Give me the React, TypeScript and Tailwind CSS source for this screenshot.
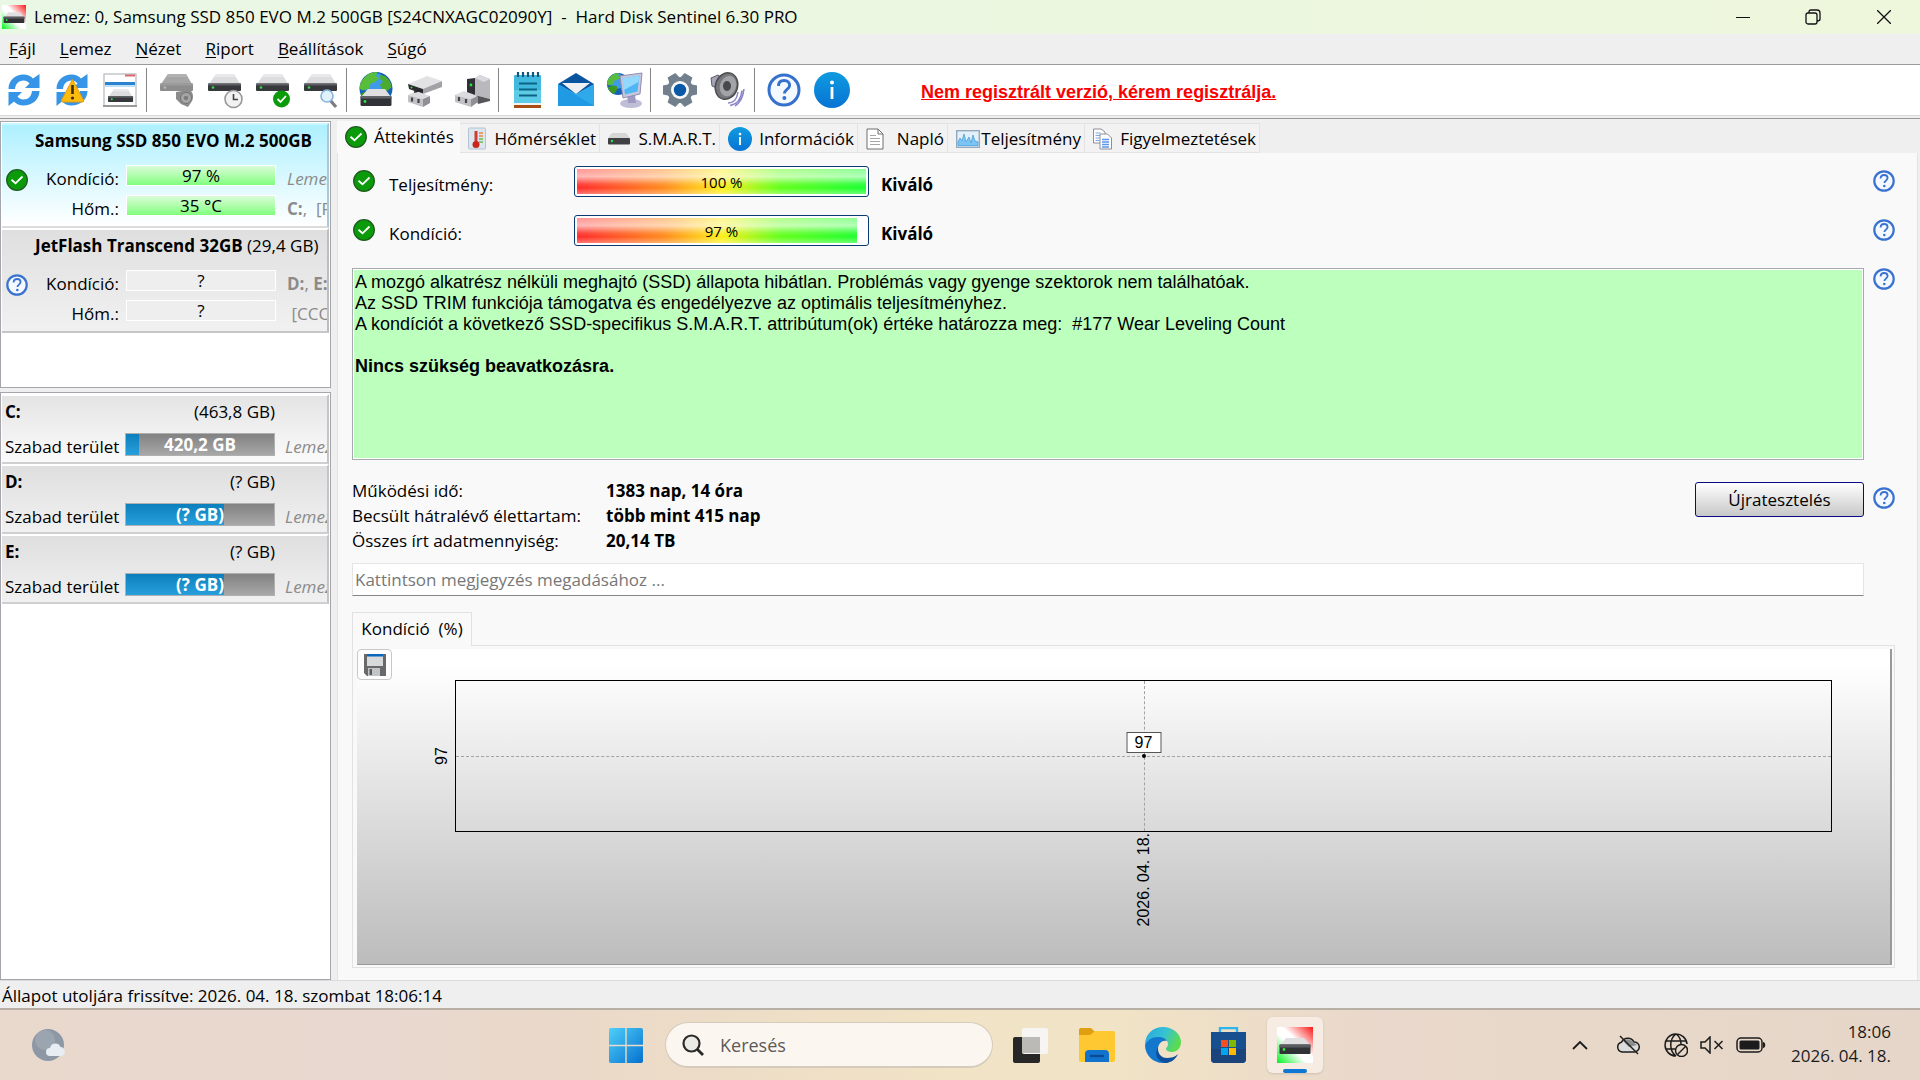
import React from "react";

const CheckIcon: React.FC<{ className?: string }> = ({ className = "size-[22px]" }) => (
  <svg viewBox="0 0 22 22" className={`shrink-0 ${className}`}>
    <circle cx="11" cy="11" r="10.3" fill="#0a9a0a" stroke="#1d5c1d" strokeWidth="1.3" />
    <path d="M5.5 10.8 9.5 14.3 16.5 7.5" fill="none" stroke="#fff" strokeWidth="1.8" />
  </svg>
);

const HelpIcon: React.FC<{ className?: string }> = ({ className = "size-[22px]" }) => (
  <svg viewBox="0 0 22 22" className={`shrink-0 ${className}`}>
    <circle cx="11" cy="11" r="9.7" fill="#f4f9ff" stroke="#3a72cf" strokeWidth="2.2" />
    <path d="M7.6 8.6C7.6 6.2 9 5 11.1 5s3.5 1.2 3.5 3.1c0 2.4-3.2 2.6-3.2 5" fill="none" stroke="#3a72cf" strokeWidth="1.8" />
    <circle cx="11.3" cy="16" r="1.3" fill="#3a72cf" />
  </svg>
);

const InfoIcon: React.FC<{ className?: string }> = ({ className = "size-6" }) => (
  <svg viewBox="0 0 36 36" className={`shrink-0 ${className}`}>
    <defs>
      <linearGradient id="info" x1="0" y1="0" x2="0" y2="1">
        <stop offset="0" stopColor="#109be0" />
        <stop offset="1" stopColor="#0673d3" />
      </linearGradient>
    </defs>
    <circle cx="18" cy="18" r="18" fill="url(#info)" />
    <path d="M18 15v12" stroke="#fff" strokeWidth="2.8" />
    <circle cx="18" cy="10.6" r="2" fill="#fff" />
  </svg>
);

const Drive: React.FC<{ gray?: boolean }> = ({ gray }) => (
  <>
    <path d="M8 0H26L32 10H1Z" fill={gray ? "#a6a6a6" : "#dcdcde"} />
    <path d="M8 0H26L28 3H6Z" fill={gray ? "#b2b2b2" : "#e9e9eb"} />
    <rect x="0" y="9.5" width="33" height="7.5" rx="1" fill={gray ? "#8d8d8d" : "#36383c"} />
    <rect x="0" y="9.5" width="33" height="2" fill={gray ? "#9c9c9c" : "#5c5e62"} />
    <circle cx="5" cy="13.5" r="1.3" fill={gray ? "#a8c0a8" : "#2ee03a"} />
  </>
);

const SentinelIcon: React.FC<{ className?: string }> = ({ className = "size-6" }) => (
  <svg viewBox="0 0 36 36" className={`shrink-0 ${className}`}>
    <defs>
      <linearGradient id="sentinel" x1="0" y1="1" x2="1" y2="0">
        <stop offset="0" stopColor="#00f21c" />
        <stop offset=".42" stopColor="#fff" />
        <stop offset=".58" stopColor="#fff" />
        <stop offset="1" stopColor="#fb1414" />
      </linearGradient>
    </defs>
    <rect width="36" height="36" fill="url(#sentinel)" />
    <path d="M9 11H27L33 18H3Z" fill="#e0e0e3" />
    <rect x="2.5" y="17.5" width="31" height="9.5" rx="1" fill="#303236" />
    <rect x="2.5" y="17.5" width="31" height="3" fill="#5a5c60" />
    <circle cx="7" cy="22.5" r="1.4" fill="#2ee03a" />
  </svg>
);

const RefreshShape = () => (
  <>
    <path d="M2 17C2 8 9 2.500 17 2.500c4 0 7 1.500 9.500 4L33 2v14H18.500l4.500-4.500C21.500 9.500 19.500 8.500 17 8.500c-5 0-8 3.500-8.500 8.500Z" fill="#3695e6" />
    <path d="M33 19c0 9-8 14.500-16 14.500-4 0-7-1.500-9.500-4L2 34V20h13.500L11 24.500c1.500 2 3.500 3 6 3 5 0 8-3.500 8.500-8.500Z" fill="#3695e6" />
  </>
);

const Globe: React.FC<{ r: number; cx: number; cy: number }> = ({ r, cx, cy }) => (
  <g transform={`translate(${cx - r} ${cy - r}) scale(${r / 16})`}>
    <circle cx="16" cy="16" r="16" fill="#1760b8" />
    <circle cx="15" cy="12" r="11" fill="#3e9be8" />
    <path d="M5 5C9 1 13 0 17 0l-1 4 3 2-4 4-4 1-2 5-6 2-3-2C0 12 2 8 5 5Z" fill="#58bd38" />
    <path d="M20 3l5 1c4 3 6 7 6 11l-5 4-4-1-2-6 3-3-3-2Z" fill="#4bab2e" />
    <path d="M8 18l6 1 1 5-5 7c-4-2-8-6-9-10Z" fill="#3c9a24" />
  </g>
);

type ToolName = "refresh" | "warn" | "window" | "noise" | "clock" | "check" | "search" | "web" | "dock" | "dock2" | "notes" | "mail" | "network" | "gear" | "sound" | "help" | "info";

const toolGroups: { name: ToolName; label: string }[][] = [
  [
    { name: "refresh", label: "Frissítés" },
    { name: "warn", label: "Figyelmeztetés" },
    { name: "window", label: "Ablak" },
  ],
  [
    { name: "noise", label: "Zajszint" },
    { name: "clock", label: "Ütemezés" },
    { name: "check", label: "Teszt" },
    { name: "search", label: "Keresés" },
  ],
  [
    { name: "web", label: "Web" },
    { name: "dock", label: "Csatlakozás" },
    { name: "dock2", label: "Leválasztás" },
  ],
  [
    { name: "notes", label: "Riport" },
    { name: "mail", label: "E-mail" },
    { name: "network", label: "Hálózat" },
  ],
  [
    { name: "gear", label: "Beállítások" },
    { name: "sound", label: "Hang" },
  ],
  [
    { name: "help", label: "Súgó" },
    { name: "info", label: "Információ" },
  ],
];

const toolIcons: Record<ToolName, React.ReactNode> = {
  refresh: (
    <g transform="translate(.5 0)">
      <RefreshShape />
    </g>
  ),
  warn: (
    <g transform="translate(.5 0)">
      <RefreshShape />
      <path d="M18 7.500 29 28q.8 2-1.200 2H8.200Q6.200 30 7 28Z" fill="#fdbb10" stroke="#e79a0c" />
      <path d="M18 13v9" stroke="#3a2c0c" strokeWidth="2.6" />
      <circle cx="18" cy="26" r="1.6" fill="#3a2c0c" />
    </g>
  ),
  window: (
    <>
      <rect x="2" y="2" width="32" height="32" fill="#fff" stroke="#b4b8bd" strokeWidth="1.2" />
      <path d="M1 34H35" stroke="#9a9a9a" strokeWidth="2" />
      <path d="M23 3.500H33" stroke="#d86a6c" strokeWidth="2" />
      <path d="M3 11.500H33" stroke="#2b82cf" strokeWidth="3" />
      <path d="M3 14H33" stroke="#bfe0f6" strokeWidth="2" />
      <g transform="translate(6 17) scale(.76)">
        <Drive />
      </g>
    </>
  ),
  noise: (
    <g transform="translate(2 0)">
      <g transform="translate(0 2)">
        <Drive gray />
      </g>
      <path d="M16 20l6-1 7-1c4 1 5 7 3 11l-4 6-7-3-5-5Z" fill="#8c8c8c" />
      <circle cx="26" cy="26" r="5.5" fill="#a6a6a6" stroke="#747474" />
      <circle cx="26" cy="26" r="2.2" fill="#7c7c7c" />
    </g>
  ),
  clock: (
    <g transform="translate(2 0)">
      <g transform="translate(0 2)">
        <Drive />
      </g>
      <circle cx="25.5" cy="27" r="8.5" fill="#f2f2f2" stroke="#989898" strokeWidth="1.6" />
      <path d="M25.500 22v5.500h4.500" fill="none" stroke="#444" strokeWidth="1.6" />
    </g>
  ),
  check: (
    <g transform="translate(2 0)">
      <g transform="translate(0 2)">
        <Drive />
      </g>
      <circle cx="25.5" cy="27" r="8.5" fill="#0a9a0a" />
      <path d="M21.500 27l3 3 5.500-6" fill="none" stroke="#fff" strokeWidth="1.8" />
    </g>
  ),
  search: (
    <g transform="translate(2 0)">
      <g transform="translate(0 2)">
        <Drive />
      </g>
      <path d="M26 28l6 7" stroke="#7c7c84" strokeWidth="3.2" />
      <circle cx="23" cy="24" r="6" fill="#dff2fd" stroke="#86b4dd" strokeWidth="1.6" />
    </g>
  ),
  web: (
    <>
      <Globe cx={18} cy={16.5} r={16.5} />
      <path d="M10 17H27L33 25H3Z" fill="#dfdfe2" />
      <rect x="2.5" y="24" width="31" height="10" rx="1.5" fill="#303237" />
      <rect x="2.5" y="24" width="31" height="2.5" fill="#606267" />
      <circle cx="7" cy="29.5" r="1.4" fill="#2ee03a" />
    </>
  ),
  dock: (
    <>
      <path d="M2 12 21 4 36 9 17 17Z" fill="#e2e2e4" />
      <path d="M2 12 17 17v5L3 17Z" fill="#2b2c30" />
      <path d="M17 17 36 9v6L17 22Z" fill="#a2a2a6" />
      <circle cx="5.5" cy="15.5" r="1" fill="#2ee03a" />
      <path d="M2 23 10 19 24 24 17 27Z" fill="#dcdce0" />
      <path d="M2 23 17 27v8L2 30Z" fill="#c1c1c6" />
      <path d="M17 27 24 24v7L17 35Z" fill="#8f8f95" />
      <path d="M6 25.500v4M12.500 27v4" stroke="#44454a" strokeWidth="2.2" />
      <path d="M8 20c5 0 4-3 8-1" fill="none" stroke="#222" strokeWidth="1.5" />
    </>
  ),
  dock2: (
    <>
      <path d="M13 7 21 6v17H13Z" fill="#303136" />
      <path d="M21 6 26 3 36 7v20l-15-4Z" fill="#b9b9bd" />
      <path d="M21 6 26 3 36 7 30 10Z" fill="#dadade" />
      <path d="M21 23 36 27v2L24 32Z" fill="#56565a" />
      <circle cx="17" cy="13" r="1.4" fill="#2ee03a" />
      <path d="M1 23 10 19 24 24 17 27Z" fill="#dcdce0" />
      <path d="M1 23 17 27v8L1 30Z" fill="#c1c1c6" />
      <path d="M17 27 24 24v6L17 35Z" fill="#8f8f95" />
      <path d="M5 25v4M12 27v4" stroke="#44454a" strokeWidth="2.2" />
    </>
  ),
  notes: (
    <>
      <rect x="4" y="3" width="27" height="29" rx="1" fill="#41b9de" />
      <rect x="4" y="18" width="27" height="14" fill="#5ecbe6" />
      <path d="M4 34.500H31" stroke="#a84e12" strokeWidth="3" />
      <path d="M4 32H31" stroke="#f3f3f3" strokeWidth="2" />
      <path d="M8 0v5M13 0v5M18 0v5M23 0v5M28 0v5" stroke="#15577a" strokeWidth="2.2" />
      <path d="M9 11.500H27M9 17.500H27M9 23.500H27" stroke="#0b6484" strokeWidth="2.2" />
    </>
  ),
  mail: (
    <>
      <path d="M0 12 18 1 36 12V24H0Z" fill="#0a54a0" />
      <path d="M0 12 18 22 36 12V34H0Z" fill="#35b3ee" />
      <path d="M0 34 36 12V34Z" fill="#30a9ea" />
      <path d="M0 12 36 34H0Z" fill="#1f9ae3" />
      <path d="M4 11H32L18 22Z" fill="#eef0f2" />
    </>
  ),
  network: (
    <>
      <Globe cx={12} cy={12} r={11} />
      <ellipse cx="25" cy="31.5" rx="11" ry="4.5" fill="#c0bed6" />
      <path d="M21 22h8l1 9h-8Z" fill="#9e9cc2" />
      <path d="M14 4 36 1 34 22 17 26Z" fill="#c6c7dc" stroke="#8e8fb4" />
      <path d="M16.500 6.500 33.500 3.500 31.500 19.500 19 22.500Z" fill="#4fb6f5" />
      <path d="M16.500 6.500 33.500 3.500 32.500 10 18 18Z" fill="#93d8fd" />
    </>
  ),
  gear: (
    <>
      <g fill="#71808c">
        <circle cx="18" cy="18" r="13" />
        <path d="M13.500 1h9L24 8H12ZM13.500 35h9L24 28H12Z" transform="rotate(30 18 18)" />
        <path d="M13.500 1h9L24 8H12ZM13.500 35h9L24 28H12Z" transform="rotate(90 18 18)" />
        <path d="M13.500 1h9L24 8H12ZM13.500 35h9L24 28H12Z" transform="rotate(150 18 18)" />
      </g>
      <circle cx="18" cy="18" r="9" fill="#f8f8f8" />
      <circle cx="18" cy="18" r="6.2" fill="#0859a8" />
    </>
  ),
  sound: (
    <>
      <path d="M1 6 8 3 14 8 9 17 2 14Z" fill="#a6a4b8" stroke="#5d5d68" />
      <ellipse cx="16.5" cy="14" rx="11" ry="13.5" transform="rotate(18 16.500 14)" fill="#76777a" stroke="#4c4d50" strokeWidth="1.5" />
      <ellipse cx="18" cy="14" rx="8" ry="10.5" transform="rotate(18 18 14)" fill="#a2a3a6" />
      <ellipse cx="17" cy="14" rx="4" ry="5" fill="#47484b" />
      <path d="M18 31c6 0 9-4 10-11M20 33.500c7-1 11-6 12-15M25 34c5-3 8-8 9-17" fill="none" stroke="#8985c8" strokeWidth="1.5" />
    </>
  ),
  help: (
    <>
      <circle cx="18" cy="18" r="15" fill="#f4f9ff" stroke="#3670cd" strokeWidth="3" />
      <path d="M12.500 14c0-3.600 2.300-5.500 5.600-5.500s5.500 1.900 5.500 4.900c0 3.800-5.200 4.200-5.200 8.100" fill="none" stroke="#3670cd" strokeWidth="2.9" />
      <circle cx="18.4" cy="26" r="2" fill="#3670cd" />
    </>
  ),
  info: <InfoIcon className="size-9" />,
};

const menuItems = ["Fájl", "Lemez", "Nézet", "Riport", "Beállítások", "Súgó"];

const disks = [
  { name: "Samsung SSD 850 EVO M.2 500GB", size: "", ok: true, health: "97 %", temp: "35 °C" },
  { name: "JetFlash Transcend 32GB", size: "(29,4 GB)", ok: false, health: "?", temp: "?" },
];

const volumes = [
  { letter: "C:", size: "(463,8 GB)", free: "420,2 GB", used: 9 },
  { letter: "D:", size: "(? GB)", free: "(? GB)", used: 66 },
  { letter: "E:", size: "(? GB)", free: "(? GB)", used: 66 },
];

const DiskBar: React.FC<{ ok: boolean; text: string }> = ({ ok, text }) => (
  <div className={`mt-2 ml-[7px] h-[21px] w-[150px] shrink-0 border border-white text-center leading-[20px] ${ok ? "bg-linear-to-b from-[#d9fbd7] to-[#7dff7b]" : "bg-[#eeeeee]"}`}>{text}</div>
);

const Sidebar = () => (
  <aside className="flex w-[331px] shrink-0 flex-col gap-1 whitespace-nowrap">
    <div className="h-[267px] shrink-0 overflow-hidden border border-[#a5a5ab] bg-white p-px">
      {disks.map((disk) => (
        <div
          key={disk.name}
          className={`h-[105px] overflow-hidden border-t-2 border-r-2 border-b-2 pl-1 ${
            disk.ok ? "border-t-[#c9f6ff] border-r-[#a9c9d4] border-b-[#dcdcdc] bg-linear-to-b from-[#adf0ff] to-white" : "border-t-white border-r-[#bdbdbd] border-b-[#c6c6c6] bg-linear-to-b from-[#dfdfdf] to-[#f1f1f1]"
          }`}
        >
          <div className="pl-[29px] leading-8">
            <b>{disk.name}</b> {disk.size}
          </div>
          <div className="flex h-[30px] items-start">
            {disk.ok ? <CheckIcon className="mt-3 size-[22px]" /> : <HelpIcon className="mt-3 size-[22px]" />}
            <span className="mt-[11px] w-[91px] shrink-0 text-right">Kondíció:</span>
            <DiskBar ok={disk.ok} text={disk.health} />
            <span className="mt-[11px] shrink-0 pl-[11px] text-[#8b8b8b]">
              {disk.ok ? (
                <i>Lemez</i>
              ) : (
                <>
                  <b>D:</b>, <b>E:</b>
                </>
              )}
            </span>
          </div>
          <div className="flex h-[30px] items-start pl-[22px]">
            <span className="mt-[11px] w-[91px] shrink-0 text-right">Hőm.:</span>
            <DiskBar ok={disk.ok} text={disk.temp} />
            <span className="mt-[11px] shrink-0 pl-[11px] text-[#8b8b8b]">
              {disk.ok ? (
                <>
                  <b>C:</b>,&nbsp; [R
                </>
              ) : (
                <>&nbsp;[CCC</>
              )}
            </span>
          </div>
        </div>
      ))}
    </div>
    <div className="flex-1 overflow-hidden border border-[#a5a5ab] bg-white p-px">
      {volumes.map((vol, i) => (
        <div
          key={vol.letter}
          className={`h-[70px] overflow-hidden border-t-2 border-r-2 border-b-2 border-t-white border-r-[#c4c4c4] border-b-[#cfcfcf] bg-linear-to-b pl-[3px] ${i === 0 ? "from-[#e4e4e4] to-[#fbfbfb]" : "from-[#dfdfdf] to-[#f1f1f1]"}`}
        >
          <div className="flex w-[270px] justify-between leading-8">
            <b>{vol.letter}</b>
            <span>{vol.size}</span>
          </div>
          <div className="flex items-start">
            <span className="w-[120px] shrink-0 pt-2">Szabad terület</span>
            <div className="relative mt-[5px] h-[23px] w-[150px] shrink-0 border border-[#b0b0b0] bg-linear-to-b from-[#828282] to-[#a8a8a8]">
              <div className="h-full bg-linear-to-b from-[#0b80bd] to-[#279fdc]" style={{ width: `${vol.used}%` }} />
              <b className="absolute inset-0 text-center leading-[21px] text-white">{vol.free}</b>
            </div>
            <i className="shrink-0 pt-2 pl-[10px] text-[#8b8b8b]">Lemez</i>
          </div>
        </div>
      ))}
    </div>
  </aside>
);

const tabs = [
  {
    label: "Hőmérséklet",
    width: "w-[140px]",
    icon: (
      <svg viewBox="0 0 18 24" className="h-6 w-[18px]">
        <rect x=".5" y="1" width="17" height="21" rx="1" fill="#dbe6f0" stroke="#b4c3d0" />
        <path d="M11 6h4M11 9h4" stroke="#e98a3c" strokeWidth="1.5" />
        <path d="M11 12h4M11 15h4" stroke="#6cba4b" strokeWidth="1.5" />
        <path d="M8 4v13" stroke="#d13b30" strokeWidth="3" />
        <circle cx="8" cy="17.5" r="3.5" fill="#c8261d" />
      </svg>
    ),
  },
  {
    label: "S.M.A.R.T.",
    width: "w-[120px]",
    icon: (
      <svg viewBox="0 0 22 12" className="h-3 w-[22px]">
        <path d="M4 0H18L22 5H0Z" fill="#d6d6d6" />
        <rect y="5" width="22" height="6.5" rx="1" fill="#3e4043" />
        <circle cx="4" cy="8" r="1.2" fill="#2ee03a" />
      </svg>
    ),
  },
  { label: "Információk", width: "w-[138px]", icon: <InfoIcon className="size-6" /> },
  {
    label: "Napló",
    width: "w-[90px]",
    icon: (
      <svg viewBox="0 0 18 22" className="h-[22px] w-[18px]">
        <path d="M1 1H12L17 6V21H1Z" fill="#fff" stroke="#6f6f6f" />
        <path d="M12 1v5h5" fill="none" stroke="#6f6f6f" />
        <path d="M4 7.500h6M4 10.500h10M4 13.500h10M4 16.500h10" stroke="#a5a5a5" />
      </svg>
    ),
  },
  {
    label: "Teljesítmény",
    width: "w-[137px]",
    icon: (
      <svg viewBox="0 0 24 18" className="h-[18px] w-6 shrink-0">
        <rect x=".7" y=".7" width="22.6" height="16.6" fill="#e3f0fa" stroke="#93a9bd" strokeWidth="1.4" />
        <path d="M2 12 4 8l2 3 2-7 2 8 3-5 2 6 2-8 2 6 3 1v3.500H2Z" fill="#7cc4f3" stroke="#4aa1dc" strokeWidth=".8" />
      </svg>
    ),
  },
  {
    label: "Figyelmeztetések",
    width: "w-[175px]",
    icon: (
      <svg viewBox="0 0 19 22" className="h-[22px] w-[19px]">
        <path d="M.5 1H8L12 4V15H.5Z" fill="#fff" stroke="#8b8f98" />
        <path d="M2.500 5h5M2.500 7.500h5M2.500 10h4M2.500 12.500h4" stroke="#7da7ea" />
        <path d="M7 6h7.500L18.500 10V21H7Z" fill="#fff" stroke="#8b8f98" />
        <path d="M9 11.500h7M9 14h7M9 16.500h7M9 19h7" stroke="#5b95ee" strokeWidth="1.3" />
      </svg>
    ),
  },
];

const HealthRow: React.FC<{ label: string; value: number }> = ({ label, value }) => (
  <div className="flex h-[49px] items-start pr-[22px] pl-[15px]">
    <CheckIcon className="mt-1 size-[22px]" />
    <span className="w-[199px] pt-2 pl-[14px]">{label}</span>
    <div className="relative h-[31px] w-[295px] rounded-[3px] border border-[#0a3a70] bg-white p-[2px]">
      <div className="h-full overflow-hidden" style={{ width: `${value}%` }}>
        <div className="h-full w-[289px] bg-[linear-gradient(to_bottom,rgba(255,255,255,.5)_0%,rgba(255,255,255,.66)_30%,rgba(255,255,255,.12)_60%,rgba(255,255,255,0)_75%,rgba(255,255,255,.35)_100%),linear-gradient(to_right,#ff2a2a,#ff8a1c_30%,#ffef1a_50%,#63ff1a_70%,#18ff30)]" />
      </div>
      <span className="absolute inset-0 text-center text-[15px] leading-[30px]">{value} %</span>
    </div>
    <b className="pt-2 pl-3">Kiváló</b>
    <button aria-label="Súgó" className="mt-1 ml-auto">
      <HelpIcon />
    </button>
  </div>
);

const Chart = () => (
  <div className="flex-1 border border-[#e2e2e2] pt-[3px] pr-[2px] pb-[2px] pl-1">
    <div className="h-full border-r-2 border-b border-r-[#999] border-b-[#999] bg-linear-to-b from-white from-5% to-[#bcbcbc]">
      <button aria-label="Mentés" className="flex h-[31px] w-[35px] items-center justify-center rounded-[4px] border border-[#c8c8c8] bg-[#fdfdfd]">
        <svg viewBox="0 0 22 22" className="size-[22px]">
          <path d="M0 0H22V22H3L0 19Z" fill="#68696b" />
          <rect x="3" y="0" width="16" height="12" fill="#d8d9db" />
          <rect x="3" y="0" width="16" height="2.5" fill="#0b67b8" />
          <rect x="4" y="14" width="12" height="8" fill="#c3c4c6" />
          <rect x="5.5" y="15" width="2.5" height="6" fill="#595a5c" />
        </svg>
      </button>
      <div className="relative mr-[58px] ml-[98px] h-[152px] border border-black font-['Liberation_Sans',sans-serif] text-[16px]">
        <div className="absolute top-1/2 right-0 left-0 border-t border-dashed border-[#a3a3a3]" />
        <div className="absolute top-0 bottom-0 left-1/2 border-l border-dashed border-[#a3a3a3]" />
        <div className="absolute top-[51px] left-1/2 h-[21px] w-[35px] -translate-x-1/2 border border-[#555] bg-white text-center leading-[19px]">97</div>
        <div className="absolute top-1/2 left-1/2 size-1 -translate-x-1/2 -translate-y-1/2 rounded-full bg-black" />
        <div className="absolute top-1/2 -left-[24px] -translate-y-1/2 rotate-180 leading-[20px] [writing-mode:vertical-rl]">97</div>
        <div className="absolute top-[152px] left-1/2 -translate-x-1/2 rotate-180 leading-[20px] whitespace-nowrap [writing-mode:vertical-rl]">2026. 04. 18.</div>
      </div>
    </div>
  </div>
);

const Overview = () => (
  <main className="mr-[2px] flex min-w-0 flex-1 flex-col">
    <div role="tablist" className="flex items-end whitespace-nowrap">
      <button role="tab" aria-selected="true" className="flex h-8 w-[123px] items-center gap-[7px] bg-[#f9f9f9] pl-2">
        <CheckIcon />
        Áttekintés
      </button>
      {tabs.map((tab) => (
        <button key={tab.label} role="tab" aria-selected="false" className={`flex h-[30px] items-center justify-between border border-l-0 border-[#e3e3e3] bg-[#f2f2f2] pt-[2px] pr-[3px] pl-2 ${tab.width}`}>
          {tab.icon}
          {tab.label}
        </button>
      ))}
    </div>
    <div className="flex flex-1 flex-col border-r border-l border-[#e3e3e3] bg-[#f9f9f9] pt-[13px]">
      <HealthRow label="Teljesítmény:" value={100} />
      <HealthRow label="Kondíció:" value={97} />
      <div className="flex gap-[9px] pt-1 pr-[22px] pl-[14px]">
        <div className="h-[192px] flex-1 border border-[#a9a9b1] bg-[#bdffbd] px-[2px] pt-[3px] font-['Liberation_Sans',sans-serif] text-[18px] leading-[21px] outline outline-1 -outline-offset-2 outline-white">
          <p>A mozgó alkatrész nélküli meghajtó (SSD) állapota hibátlan. Problémás vagy gyenge szektorok nem találhatóak.</p>
          <p>Az SSD TRIM funkciója támogatva és engedélyezve az optimális teljesítményhez.</p>
          <p>A kondíciót a következő SSD-specifikus S.M.A.R.T. attribútum(ok) értéke határozza meg:&nbsp; #177 Wear Leveling Count</p>
          <p className="pt-[21px] font-bold">Nincs szükség beavatkozásra.</p>
        </div>
        <button aria-label="Súgó" className="self-start">
          <HelpIcon />
        </button>
      </div>
      <div className="flex items-start gap-[9px] pt-[18px] pr-[22px] pl-[14px]">
        <dl className="grid h-[75px] flex-1 grid-cols-[254px_1fr] content-start leading-[25px]">
          <dt>Működési idő:</dt>
          <dd className="font-bold">1383 nap, 14 óra</dd>
          <dt>Becsült hátralévő élettartam:</dt>
          <dd className="font-bold">több mint 415 nap</dd>
          <dt>Összes írt adatmennyiség:</dt>
          <dd className="font-bold">20,14 TB</dd>
        </dl>
        <button className="mt-1 h-[35px] w-[169px] rounded-[3px] border border-[#0a0a82] bg-linear-to-b from-white to-[#c8c8c8]">Újratesztelés</button>
        <button aria-label="Súgó" className="mt-[9px]">
          <HelpIcon />
        </button>
      </div>
      <div className="pt-[10px] pr-[53px] pl-[14px]">
        <input aria-label="Megjegyzés" placeholder="Kattintson megjegyzés megadásához ..." className="block h-[33px] w-full border border-[#e5e5e5] border-b-[#858585] bg-white px-[2px] placeholder:text-[#777]" />
      </div>
      <div className="flex flex-1 flex-col pt-4 pr-[22px] pb-3 pl-[14px]">
        <button role="tab" aria-selected="true" className="z-10 -mb-px h-[34px] w-[120px] border border-b-0 border-[#e2e2e2] bg-[#f9f9f9] pb-[2px] whitespace-pre">
          {"Kondíció  (%)"}
        </button>
        <Chart />
      </div>
    </div>
  </main>
);

const Taskbar = () => (
  <footer className="grid h-[72px] grid-cols-[1fr_auto_1fr] items-center border-t-2 border-[#b9b0a5] bg-[linear-gradient(to_right,#e9d8cc_0%,#e8d8cf_20%,#ead9c8_30%,#f1e3c5_50%,#f1e3c5_58%,#e9d8cb_72%,#e7d8ca_85%,#e6d6c9_100%)] pl-3 text-[#1c1c1c]">
    <button aria-label="Időjárás" className="ml-5 w-9">
      <svg viewBox="0 0 36 34" className="h-[34px] w-9">
        <circle cx="16" cy="17" r="16" fill="#8d98a4" />
        <circle cx="13" cy="12" r="10" fill="#9ba5b0" />
        <path d="M18 28a4 4 0 0 1 0-8 5.500 5.500 0 0 1 10.500-1 4.600 4.600 0 0 1 1 9Z" fill="#e8edf4" />
      </svg>
    </button>
    <div className="flex items-center">
      <button aria-label="Start" className="mr-[22px]">
        <svg viewBox="0 0 34 35" className="h-[35px] w-[34px]">
          <defs>
            <linearGradient id="win" x1="0" y1="0" x2="1" y2="1">
              <stop offset="0" stopColor="#4ed0fa" />
              <stop offset="1" stopColor="#0670cf" />
            </linearGradient>
          </defs>
          <path d="M2 0H16.300V16.800H0V2Q0 0 2 0ZM17.700 0H32Q34 0 34 2V16.800H17.700ZM0 18.200H16.300V35H2Q0 35 0 33ZM17.700 18.200H34V33Q34 35 32 35H17.700Z" fill="url(#win)" />
        </svg>
      </button>
      <label className="mr-[20px] flex h-[46px] w-[328px] items-center gap-4 rounded-full border border-b-2 border-[#d5cbbd] bg-[#fbf6f0] pl-4">
        <svg viewBox="0 0 22 22" className="size-[22px] shrink-0">
          <circle cx="9.5" cy="9.5" r="8" fill="#eceae7" stroke="#2a2a2a" strokeWidth="2.2" />
          <path d="M15 15l6 6" stroke="#2a2a2a" strokeWidth="2.8" />
        </svg>
        <input aria-label="Keresés" placeholder="Keresés" className="min-w-0 flex-1 bg-transparent text-[18px] outline-none placeholder:text-[#5c5a58]" />
      </label>
      <button aria-label="Feladatnézet" className="mr-[31px]">
        <svg viewBox="0 0 35 35" className="size-[35px]">
          <rect y="9" width="27" height="26" rx="2" fill="#272727" />
          <rect x="9" y="0" width="26" height="26" rx="2" fill="#f6f5f3" />
          <rect x="9" y="9" width="18" height="16" fill="#bcbab6" />
        </svg>
      </button>
      <button aria-label="Fájlkezelő" className="mr-[30px]">
        <svg viewBox="0 0 36 34" className="h-[34px] w-9">
          <path d="M0 2Q0 0 2 0H12l4 4-3 5H0Z" fill="#e19e10" />
          <path d="M0 7H11L16 3H34Q36 3 36 5V32Q36 34 34 34H2Q0 34 0 32Z" fill="#fdc831" />
          <path d="M6 34V26Q6 22 10 22H26Q30 22 30 26V34Z" fill="#1273cf" />
          <path d="M11 28H25" stroke="#0a4b94" strokeWidth="2.4" />
        </svg>
      </button>
      <button aria-label="Edge" className="mr-[30px]">
        <svg viewBox="0 0 36 36" className="size-9">
          <defs>
            <linearGradient id="edge" x1="0" y1="0" x2="1" y2=".4">
              <stop offset="0" stopColor="#2aa6dd" />
              <stop offset=".55" stopColor="#35c1d6" />
              <stop offset="1" stopColor="#5bdb52" />
            </linearGradient>
          </defs>
          <path d="M0 18C0 7 8 0 18 0s18 7 18 15c0 6-4 10-9 10-4 0-6-1.500-6-3s2-2 2-5c0-4-4-6-9-6C7 11 2 14 0 18Z" fill="url(#edge)" />
          <path d="M0 18c2-4.500 7-8 13-8 5 0 8 2 9 4-4-1.500-9 2-9 8 0 6 4 12 11 13.500-2 .5-4 .5-6 .5C8 36 0 28 0 18Z" fill="#1277cd" />
          <path d="M13 20c-1 6 3 11 9 11 4 0 8-1 11-4-2 5-7 9-13 9-8-2-11-9-7-16Z" fill="#0e4f9e" />
        </svg>
      </button>
      <button aria-label="Store" className="mr-[21px]">
        <svg viewBox="0 0 35 36" className="h-9 w-[35px]">
          <path d="M9 7V1H26V7" fill="none" stroke="#2cb6ec" strokeWidth="2.4" />
          <path d="M0 5H35V32Q35 36 31 36H4Q0 36 0 32Z" fill="#184f8f" />
          <path d="M0 22H35V32Q35 36 31 36H4Q0 36 0 32Z" fill="#1b437c" />
          <rect x="10" y="13" width="7" height="7" fill="#f25022" />
          <rect x="18" y="13" width="7" height="7" fill="#7fba00" />
          <rect x="10" y="21" width="7" height="7" fill="#00a4ef" />
          <rect x="18" y="21" width="7" height="7" fill="#ffb900" />
        </svg>
      </button>
      <button aria-label="Hard Disk Sentinel" className="flex h-14 w-14 flex-col items-center justify-end gap-[6px] rounded-md bg-[#f6ece4] shadow-sm">
        <SentinelIcon className="size-9" />
        <span className="h-1 w-6 rounded-full bg-[#0a78d4]" />
      </button>
    </div>
    <div className="flex items-center justify-end pr-[29px]">
      <svg viewBox="0 0 16 10" className="mr-7 h-[10px] w-4">
        <path d="M1 9 8 2l7 7" fill="none" stroke="#1c1c1c" strokeWidth="1.8" />
      </svg>
      <svg viewBox="0 0 24 20" className="mr-6 h-5 w-6">
        <path d="M6 17a5 5 0 0 1-.5-9.800A7 7 0 0 1 18 7a5 5 0 0 1 .5 10Z" fill="#dcdcdc" stroke="#1c1c1c" strokeWidth="1.5" />
        <path d="M7 6a7 7 0 0 1 10 1l4 3-8 2Z" fill="#8c8c8c" />
        <path d="M4 1 22 19" stroke="#1c1c1c" strokeWidth="1.5" />
      </svg>
      <svg viewBox="0 0 24 24" className="mr-3 size-6" fill="none" stroke="#1c1c1c" strokeWidth="1.5">
        <path d="M23 11A11 11 0 1 0 12 23M1.500 8H22.500M1.500 16H11M12 23C5 18 5 6 12 1c3 2 5 6 5 10" />
        <circle cx="17.5" cy="17.5" r="6" />
        <path d="M13.500 21.500l8-8" />
      </svg>
      <svg viewBox="0 0 24 18" className="mr-3 h-[18px] w-6" fill="none" stroke="#1c1c1c" strokeWidth="1.5">
        <path d="M1 6H5L10 1V17L5 12H1ZM14.500 5l8 8M22.500 5l-8 8" />
      </svg>
      <svg viewBox="0 0 30 16" className="mr-[25px] h-4 w-[30px]">
        <rect x="1" y="1" width="25" height="14" rx="4" fill="none" stroke="#1c1c1c" strokeWidth="1.5" />
        <rect x="3.5" y="3.5" width="20" height="9" rx="1.5" fill="#1c1c1c" />
        <path d="M27 5c3 0 3 6 0 6Z" fill="#1c1c1c" />
      </svg>
      <div className="pb-[2px] text-right leading-6 whitespace-nowrap">
        <div>18:06</div>
        <div>2026. 04. 18.</div>
      </div>
    </div>
  </footer>
);

const App: React.FC = () => {
  return (
    <div className="flex h-screen flex-col overflow-hidden bg-[#efefef] font-['Open_Sans',sans-serif] text-[17px] leading-[22px] text-black">
      {/* Title bar */}
      <header className="flex h-[34px] items-center bg-linear-to-r from-[#e9f7e5] to-[#eef7dc] pl-[2px]">
        <SentinelIcon className="size-6" />
        <h1 className="pl-2 whitespace-pre">{"Lemez: 0, Samsung SSD 850 EVO M.2 500GB [S24CNXAGC02090Y]  -  Hard Disk Sentinel 6.30 PRO"}</h1>
        <div className="ml-auto flex">
          <button aria-label="Kis méret" className="flex h-[34px] w-[70px] items-center justify-center">
            <svg viewBox="0 0 14 14" className="size-[14px]">
              <path d="M0 7.500H14" stroke="#111" />
            </svg>
          </button>
          <button aria-label="Előző méret" className="flex h-[34px] w-[70px] items-center justify-center">
            <svg viewBox="0 0 16 16" className="size-4" fill="none" stroke="#111" strokeWidth="1.3">
              <rect x="1" y="4" width="11" height="11" rx="2" />
              <path d="M4 4V3Q4 1 6 1H12Q15 1 15 4V10Q15 12 12 12" />
            </svg>
          </button>
          <button aria-label="Bezárás" className="flex h-[34px] w-[72px] items-center justify-center">
            <svg viewBox="0 0 14 14" className="size-[14px]">
              <path d="M0 0 14 14M14 0 0 14" stroke="#111" strokeWidth="1.3" />
            </svg>
          </button>
        </div>
      </header>

      {/* Menu bar */}
      <nav className="flex h-[31px] items-center gap-6 border-b border-[#9a9a9a] pl-[9px]">
        {menuItems.map((item) => (
          <button key={item}>
            <span className="underline underline-offset-2">{item[0]}</span>
            {item.slice(1)}
          </button>
        ))}
      </nav>

      {/* Toolbar */}
      <div className="flex h-[51px] items-center border-b border-[#d9d9d9] bg-white">
        {toolGroups.map((group, i) => (
          <div key={i} className="flex items-center">
            {i > 0 && <div className="mr-[5px] ml-[2px] h-11 w-px bg-[#858585]" />}
            {group.map((tool) => (
              <button key={tool.name} aria-label={tool.label} className="flex h-12 w-12 items-center justify-center">
                <svg viewBox="0 0 36 36" className="size-9 overflow-visible">
                  {toolIcons[tool.name]}
                </svg>
              </button>
            ))}
          </div>
        ))}
        <a href="#register" className="pt-1 pl-[65px] font-['Liberation_Sans',sans-serif] text-[18px] font-bold text-[#fa0000] underline">
          Nem regisztrált verzió, kérem regisztrálja.
        </a>
      </div>

      {/* Work area */}
      <div className="mt-[2px] flex min-h-0 flex-1 gap-[6px] border-t border-[#9a9a9a] pt-[2px]">
        <Sidebar />
        <Overview />
      </div>

      {/* Status bar */}
      <div role="status" className="h-7 border-t border-[#dadada] pl-[2px] leading-[30px]">
        Állapot utoljára frissítve: 2026. 04. 18. szombat 18:06:14
      </div>

      <Taskbar />
    </div>
  );
};

export default App;
